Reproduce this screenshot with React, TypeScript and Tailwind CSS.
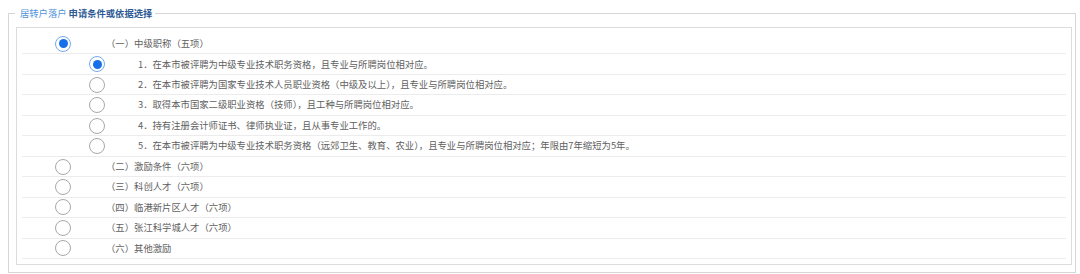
const groups = [
  { label: "（一）中级职称（五项）", checked: true },
  { label: "（二）激励条件（六项）" },
  { label: "（三）科创人才（六项）" },
  { label: "（四）临港新片区人才（六项）" },
  { label: "（五）张江科学城人才（六项）" },
  { label: "（六）其他激励" },
];

const subItems = [
  "1．在本市被评聘为中级专业技术职务资格，且专业与所聘岗位相对应。",
  "2．在本市被评聘为国家专业技术人员职业资格（中级及以上），且专业与所聘岗位相对应。",
  "3．取得本市国家二级职业资格（技师），且工种与所聘岗位相对应。",
  "4．持有注册会计师证书、律师执业证，且从事专业工作的。",
  "5．在本市被评聘为中级专业技术职务资格（远郊卫生、教育、农业），且专业与所聘岗位相对应；年限由7年缩短为5年。",
];

function Radio({ checked }: { checked?: boolean }) {
  if (checked) {
    return (
      <span className="w-[16px] h-[16px] shrink-0 rounded-full border-[1.5px] border-[#74a9ec] bg-white flex items-center justify-center">
        <span className="w-[9px] h-[9px] rounded-full bg-[#1670ea]" />
      </span>
    );
  }
  return <span className="w-[16px] h-[16px] shrink-0 rounded-full border border-[#a8a8a8] bg-white" />;
}

function Row({ level, checked, text }: { level: 1 | 2; checked?: boolean; text: string }) {
  return (
    <div
      className={
        "h-[20.47px] border-b border-[#ececec] flex items-center " +
        (level === 1 ? "pl-[33px] gap-[35px]" : "pl-[67px] gap-[33px]")
      }
    >
      <Radio checked={checked} />
      <span className="text-[9.35px] leading-none text-[#606060] whitespace-nowrap">{text}</span>
    </div>
  );
}

export default function App() {
  return (
    <div
      className="w-[1080px] h-[274px] bg-white pt-[7px] pl-[8px] pr-[4px]"
      style={{ fontFamily: '"Noto Sans CJK SC", "Microsoft YaHei", sans-serif' }}
    >
      <fieldset className="border border-[#d6d6d6] px-[7px] pb-[7px] pr-[3px] h-[266px]">
        <legend className="ml-[-1px] pl-[5px] pr-[3px] text-[9.3px] leading-[12px] whitespace-nowrap">
          <span className="text-[#4f93da]">居转户落户</span>{" "}
          <span className="font-bold text-[#2d5a94]">申请条件或依据选择</span>
        </legend>
        <div className="mt-[8px] border border-[#dcdcdc] pt-[6px] px-[5px] h-[238px]">
          <Row level={1} checked text={groups[0].label} />
          {subItems.map((t, i) => (
            <Row key={t} level={2} checked={i === 0} text={t} />
          ))}
          {groups.slice(1).map((g) => (
            <Row key={g.label} level={1} text={g.label} />
          ))}
        </div>
      </fieldset>
    </div>
  );
}
